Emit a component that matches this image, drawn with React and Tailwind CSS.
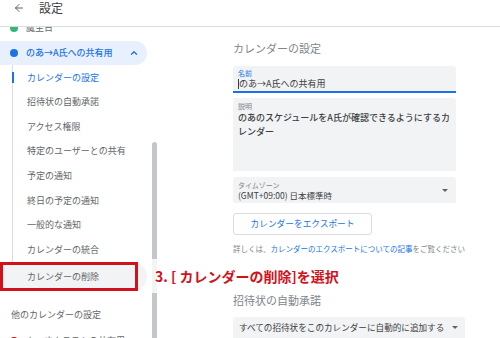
import React from "react";
import { ArrowLeft, ChevronUp } from "lucide-react";

const subItems = [
  "カレンダーの設定",
  "招待状の自動承諾",
  "アクセス権限",
  "特定のユーザーとの共有",
  "予定の通知",
  "終日の予定の通知",
  "一般的な通知",
  "カレンダーの統合",
];

const Sidebar = () => {
  return (
    <div className="w-[150px] h-full overflow-hidden">
      {/* partially scrolled item */}
      <div className="mt-[-11px] h-[24px] mb-px flex items-center pl-[10px] gap-[8px]">
        <span className="w-[8px] h-[8px] rounded-full bg-[#33b679]"></span>
        <span className="text-[9px] text-[#63666a]">誕生日</span>
      </div>

      {/* selected calendar */}
      <div className="h-[24px] w-[147px] rounded-r-full bg-[#e8f0fe] flex items-center pl-[10px] pr-[8px]">
        <span className="w-[8px] h-[8px] rounded-full bg-[#1a73e8]"></span>
        <span className="ml-[8px] text-[9px] font-medium text-[#1a73e8] flex-1">のあ→A氏への共有用</span>
        <ChevronUp size={10} strokeWidth={3} className="text-[#1a73e8]" />
      </div>

      {/* sub items */}
      <div className="flex flex-col">
        {subItems.map((label, i) => (
          <div key={label} className="h-[24.6px] flex items-center">
            <div className="relative ml-[12px] h-full border-l border-[#dadce0] pl-[14px] flex items-center">
              {i === 0 && (
                <span className="absolute left-[-1px] top-[7px] h-[11px] w-[2px] bg-[#1a73e8]"></span>
              )}
              <span className={`text-[9px] ${i === 0 ? "text-[#1a73e8]" : "text-[#63666a]"}`}>{label}</span>
            </div>
          </div>
        ))}
        <div className="relative h-[29px] w-[147px] rounded-r-full bg-[#f1f3f4] flex items-center pl-[27px]">
          <span className="text-[9px] text-[#63666a]">カレンダーの削除</span>
          <span className="absolute left-0 top-0 h-full w-[138px] border-[3px] border-[#d0121b]"></span>
        </div>
      </div>

      <div className="mt-[12px] h-[24px] flex items-center pl-[11px]">
        <span className="text-[9px] text-[#63666a]">他のカレンダーの設定</span>
      </div>
      <div className="mt-[2px] h-[24px] flex items-center pl-[10px] gap-[8px]">
        <span className="w-[8px] h-[8px] rounded-full bg-[#d50000]"></span>
        <span className="text-[9px] text-[#63666a]">ムーさんテストの共有用</span>
      </div>
    </div>
  );
};

const Field = ({ label, children, className = "" }) => (
  <div className={`w-[223px] bg-[#f1f3f4] rounded-t-[3px] px-[5px] ${className}`}>
    <div className="text-[7px] leading-[9px] text-[#80868b]">{label}</div>
    {children}
  </div>
);

export default function App() {
  return (
    <div className="relative w-[500px] h-[338px] overflow-hidden bg-white font-['Noto_Sans_CJK_JP','Noto_Sans',sans-serif]">
      {/* Header */}
      <div className="relative z-10 h-[27px] bg-white border-b border-[#dadce0] flex items-start pl-[13px] pt-px">
        <div className="h-[14px] flex items-center">
          <ArrowLeft size={12} className="text-[#5f6368]" />
        </div>
        <span className="ml-[14px] text-[12px] leading-[14px] text-[#3c4043]">設定</span>
      </div>

      <div className="flex h-[311px]">
        <Sidebar />

        {/* scrollbar */}
        <div className="w-[10px] h-full flex flex-col">
          <div className="ml-[2px] mt-[115px] w-[5px] flex-1 rounded-t-full bg-[#c4c7ca]"></div>
        </div>

        {/* Main */}
        <div className="flex-1 pl-[73px] pt-[14px]">
          <div className="text-[11px] leading-[14px] text-[#80868b]">カレンダーの設定</div>

          <div className="mt-[11px] w-[223px] h-[27px] bg-[#f1f3f4] rounded-t-[3px] border-b-2 border-[#1a73e8] px-[5px] pt-[3px]">
            <div className="text-[7px] leading-[9px] text-[#1a73e8]">名前</div>
            <div className="flex items-center text-[9px] leading-[12px] text-[#3c4043]">
              <span className="w-px h-[10px] bg-[#3c4043]"></span>
              <span>のあ→A氏への共有用</span>
            </div>
          </div>

          <Field label="説明" className="mt-[5px] h-[73px] pt-[4px]">
            <div className="text-[9px] leading-[14px] font-medium text-[#3c4043] whitespace-nowrap">
              のあのスケジュールをA氏が確認できるようにするカ
              <br />
              レンダー
            </div>
          </Field>

          <div className="mt-[6px] w-[223px] h-[26px] bg-[#f1f3f4] rounded-t-[3px] px-[5px] pt-[4px] flex">
            <div className="flex-1">
              <div className="text-[7px] leading-[9px] text-[#80868b]">タイムゾーン</div>
              <div className="text-[8.5px] leading-[11px] text-[#3c4043]">(GMT+09:00) 日本標準時</div>
            </div>
            <span className="mt-[8px] mr-[3px] w-0 h-0 border-l-[3px] border-r-[3px] border-t-[3px] border-l-transparent border-r-transparent border-t-[#5f6368]"></span>
          </div>

          <div className="mt-[10px] w-[139px] h-[22px] border border-[#dadce0] rounded-[3px] flex items-center justify-center">
            <span className="text-[8.7px] text-[#1a73e8]">カレンダーをエクスポート</span>
          </div>

          <div className="mt-[9px] text-[7.5px] leading-[10px] text-[#80868b] whitespace-nowrap">
            詳しくは、<span className="text-[#1a73e8]">カレンダーのエクスポートについての記事</span>をご覧ください
          </div>

          <div className="mt-[39px] text-[11px] leading-[14px] text-[#80868b]">招待状の自動承諾</div>

          <div className="mt-[10px] w-[232px] h-[24px] bg-[#f1f3f4] rounded-t-[3px] pl-[6px] pr-[7px] pt-[5px] flex items-start">
            <span className="flex-1 text-[8.6px] leading-[10px] text-[#3c4043] whitespace-nowrap">すべての招待状をこのカレンダーに自動的に追加する</span>
            <span className="mt-[4px] w-0 h-0 border-l-[3px] border-r-[3px] border-t-[3px] border-l-transparent border-r-transparent border-t-[#5f6368]"></span>
          </div>
        </div>
      </div>

      {/* annotation */}
      <div className="absolute left-[150px] top-[259px] h-[34px] bg-white/80 pl-[5px] pr-[4px] flex items-center">
        <span className="text-[14px] font-bold text-[#d0121b] whitespace-nowrap">3. [ カレンダーの削除]を選択</span>
      </div>
    </div>
  );
}
